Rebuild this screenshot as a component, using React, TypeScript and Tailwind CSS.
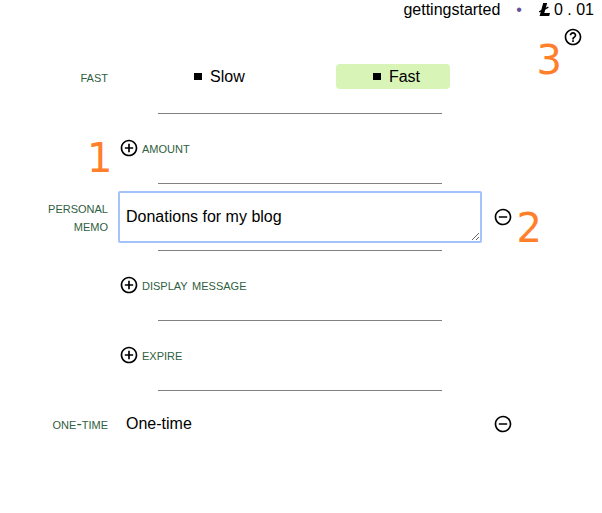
import { useState, type ReactNode } from "react";
import { MdAddCircleOutline, MdHelpOutline, MdRemoveCircleOutline } from "react-icons/md";

const labelText = "text-base leading-[18px] text-[#2f6040] [font-variant-caps:small-caps]";

function Row({ label, action, children, className = "" }: {
  label?: ReactNode;
  action?: ReactNode;
  children: ReactNode;
  className?: string;
}) {
  return (
    <div className={`grid grid-cols-[108px_1fr_110px] items-center gap-x-[10px] ${className}`}>
      <div className="pl-8 text-right">{label}</div>
      <div className="min-w-0">{children}</div>
      <div className="flex pl-px">{action}</div>
    </div>
  );
}

function Divider() {
  return <hr className="mr-40 ml-[158px] border-t border-[#808080]" />;
}

function AddRow({ text }: { text: string }) {
  return (
    <Row className="mb-0.5 h-[67px]">
      <button type="button" className="flex items-center gap-[3px] pl-px">
        <MdAddCircleOutline size={20} />
        <span className={labelText}>{text}</span>
      </button>
    </Row>
  );
}

function RemoveButton({ name }: { name: string }) {
  return (
    <button type="button" aria-label={`Remove ${name}`}>
      <MdRemoveCircleOutline size={20} />
    </button>
  );
}

function CoinIcon() {
  return (
    <svg width="13" height="14" viewBox="0 0 13 14" aria-hidden="true">
      <path d="M5.2 0H9.2L6.3 10H12L11.2 13H1.6Z" />
      <path d="M1.2 8.8L10.4 4.2" stroke="currentColor" strokeWidth="1.4" />
    </svg>
  );
}

function Marker({ text, className }: { text: string; className: string }) {
  return (
    <span className={`absolute font-['DejaVu_Sans',sans-serif] text-[40px] leading-[40px] text-[#ff7f2a] ${className}`}>
      {text}
    </span>
  );
}

export default function App() {
  const [speed, setSpeed] = useState("Fast");
  return (
    <div className="relative min-h-screen bg-white font-['Liberation_Sans',Arial,sans-serif] text-base leading-[18px] text-black">
      <header className="flex items-center justify-end pt-px pr-2">
        <span>gettingstarted</span>
        <span className="mx-4 text-[#6450a0]">•</span>
        <span className="flex items-center gap-[3px]">
          <CoinIcon />
          <span>0 . 01</span>
        </span>
      </header>
      <div className="flex justify-end pt-2 pr-[19px]">
        <button type="button" aria-label="Help">
          <MdHelpOutline size={20} />
        </button>
      </div>
      <form className="pt-[17px]">
        <Row label={<span id="speed" className={labelText}>fast</span>}>
          <div role="radiogroup" aria-labelledby="speed" className="mr-8 ml-[39px] flex justify-between">
            {["Slow", "Fast"].map((s) => (
              <label
                key={s}
                className={`flex items-center gap-2 rounded pr-[30px] pl-[37px] leading-[25px] ${s === speed ? "bg-[#d8f4b7]" : ""}`}
              >
                <input
                  type="radio"
                  name="speed"
                  checked={s === speed}
                  onChange={() => setSpeed(s)}
                  className="h-[7px] w-2 appearance-none bg-black"
                />
                {s}
              </label>
            ))}
          </div>
        </Row>
        <div className="h-6" />
        <Divider />
        <AddRow text="amount" />
        <Divider />
        <Row
          className="h-[66px]"
          label={<label htmlFor="memo" className={`block ${labelText}`}>personal memo</label>}
          action={<RemoveButton name="personal memo" />}
        >
          <textarea
            id="memo"
            defaultValue="Donations for my blog"
            className="block h-[52px] w-full resize-y rounded-xs border-2 border-[#a5c3fb] px-[6px] py-[15px] outline-none"
          />
        </Row>
        <Divider />
        <AddRow text="display message" />
        <Divider />
        <AddRow text="expire" />
        <Divider />
        <Row
          className="h-[66px]"
          label={<span className={labelText}>one-time</span>}
          action={<RemoveButton name="one-time" />}
        >
          <span className="px-2">One-time</span>
        </Row>
      </form>
      <Marker text="1" className="top-[138px] left-[87px]" />
      <Marker text="2" className="top-[208px] right-[60px]" />
      <Marker text="3" className="top-10 right-10" />
    </div>
  );
}
